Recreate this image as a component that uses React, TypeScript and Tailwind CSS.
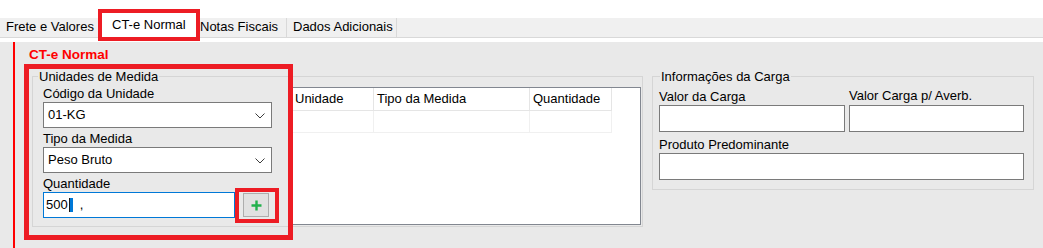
import React from "react";

function Chevron() {
  return (
    <svg width="10" height="6" viewBox="0 0 10 6" className="mt-[2px]">
      <polyline points="0.5,0.5 5,5 9.5,0.5" fill="none" stroke="#3c3c3c" strokeWidth="1" />
    </svg>
  );
}

function Select({ value }: { value: string }) {
  return (
    <div className="flex h-[26px] w-full items-center justify-between border border-[#7a7a7a] bg-white pl-[4px] pr-[6px]">
      <span>{value}</span>
      <Chevron />
    </div>
  );
}

export default function App() {
  return (
    <div className="relative flex h-[248px] w-[1043px] flex-col overflow-hidden bg-white font-['Liberation_Sans',Arial,sans-serif] text-[13px] leading-[16px] text-black">
      {/* top white */}
      <div className="h-[13px] shrink-0" />
      {/* tabs */}
      <div className="flex h-[25px] shrink-0 items-end">
        <div className="h-[20px] w-[100px] border-b border-r border-[#d9d9d9] bg-[#f0f0f0] pl-[6px] pt-[1px] leading-[16px]">
          Frete e Valores
        </div>
        <div className="h-[25px] w-[98px] bg-white pl-[12px] pt-[4px] leading-[16px]">CT-e Normal</div>
        <div className="h-[20px] w-[89px] border-b border-r border-[#d9d9d9] bg-[#f0f0f0] pl-[2px] pt-[1px] leading-[16px]">
          Notas Fiscais
        </div>
        <div className="h-[20px] w-[110px] border-b border-r border-[#d9d9d9] bg-[#f0f0f0] pl-[6px] pt-[1px] leading-[16px]">
          Dados Adicionais
        </div>
        <div className="h-[20px] flex-1 border-b border-[#d9d9d9] bg-[#f0f0f0]" />
      </div>
      <div className="h-[4px] shrink-0 bg-white" />
      {/* panel */}
      <div className="flex-1 bg-[#e9e9e9]">
        <div className="ml-[13px] h-full border-l-2 border-[#ff0000] pl-[14px] pt-[5px]">
          <div className="text-[13.5px] font-bold leading-[16px] text-[#ff0000]">CT-e Normal</div>
          <div className="ml-[3px] mt-[13px] flex items-start">
            {/* Unidades de Medida */}
            <div className="relative w-[611px] border border-[#d5d5d5] pb-[1px]">
              <span className="absolute left-[5px] top-[-8px] bg-[#e9e9e9] px-[1px]">Unidades de Medida</span>
              <div className="flex items-start pl-[10px]">
                <div className="w-[229px] pt-[9px]">
                  <div>Código da Unidade</div>
                  <Select value="01-KG" />
                  <div className="mt-[3px]">Tipo da Medida</div>
                  <Select value="Peso Bruto" />
                  <div className="mt-[3px]">Quantidade</div>
                  <div className="flex items-center">
                    <div className="flex h-[26px] w-[192px] items-center border border-[#0078d7] bg-white pl-[2px]">
                      <span>500</span>
                      <span className="ml-[1px] inline-block h-[14px] w-[4px] border-l border-[#1a1a1a] bg-[#0078d7]" />
                      <span className="ml-[7px]">,</span>
                    </div>
                    <div className="ml-[8px] flex h-[24px] w-[26px] items-center justify-center border border-[#adadad] bg-[#e1e1e1]">
                      <svg width="11" height="11" viewBox="0 0 11 11">
                        <path d="M5.5 0.5V10.5M0.5 5.5H10.5" stroke="#22b14c" strokeWidth="2.4" />
                      </svg>
                    </div>
                  </div>
                </div>
                <div className="ml-[18px] mt-[10px] h-[138px] w-[351px] border border-[#828790] bg-white">
                  <div className="flex h-[23px]">
                    <div className="flex w-[83px] items-center border-b border-r border-[#e5e5e5] pl-[4px]">Unidade</div>
                    <div className="flex w-[156px] items-center border-b border-r border-[#e5e5e5] pl-[3px]">Tipo da Medida</div>
                    <div className="flex w-[82px] items-center border-b border-r border-[#e5e5e5] pl-[3px]">Quantidade</div>
                  </div>
                  <div className="flex h-[22px]">
                    <div className="w-[83px] border-b border-r border-[#f0f0f0]" />
                    <div className="w-[156px] border-b border-r border-[#f0f0f0]" />
                    <div className="w-[82px] border-b border-r border-[#f0f0f0]" />
                  </div>
                </div>
              </div>
            </div>
            {/* Informações da Carga */}
            <div className="relative ml-[9px] w-[382px] border border-[#d5d5d5] pb-[9px] pl-[6px] pr-[9px] pt-[12px]">
              <span className="absolute left-[7px] top-[-8px] bg-[#e9e9e9] px-[1px]">Informações da Carga</span>
              <div className="flex gap-[4px]">
                <div className="w-[186px]">
                  <div>Valor da Carga</div>
                  <div className="h-[27px] border border-[#7a7a7a] bg-white" />
                </div>
                <div className="w-[175px]">
                  <div className="relative top-[-1px]">Valor Carga p/ Averb.</div>
                  <div className="h-[27px] border border-[#7a7a7a] bg-white" />
                </div>
              </div>
              <div className="mt-[5px]">Produto Predominante</div>
              <div className="h-[27px] border border-[#7a7a7a] bg-white" />
            </div>
          </div>
        </div>
      </div>

      {/* annotation boxes */}
      <div className="absolute left-[98px] top-[9px] h-[32px] w-[102px] border-4 border-[#ed1c24]" />
      <div className="absolute left-[24px] top-[64px] h-[176px] w-[269px] border-[5px] border-[#ed1c24]" />
      <div className="absolute left-[235px] top-[188px] h-[35px] w-[44px] border-4 border-[#ed1c24]" />
    </div>
  );
}
